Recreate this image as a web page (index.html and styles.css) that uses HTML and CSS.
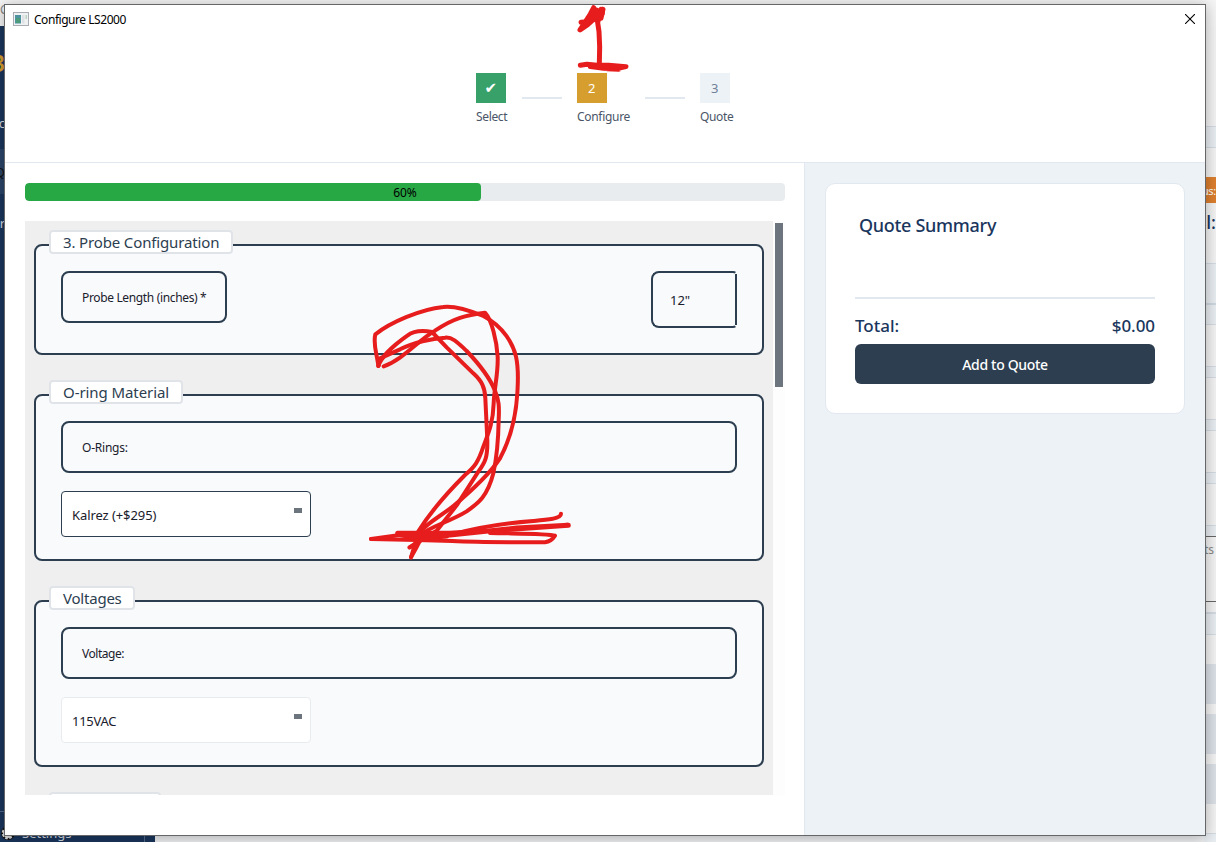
FILE: index.html
```html
<!DOCTYPE html>
<html lang="en">
<head>
<meta charset="utf-8">
<title>Configure LS2000</title>
<link rel="stylesheet" href="styles.css">
</head>
<body>
<div class="desktop">
  <div class="app">
    <div class="app-bar">C</div>
    <div class="app-body">
      <nav class="sidebar">
        <div class="peek brand">3</div>
        <div class="peek first">oc</div>
        <div class="peek active">Q</div>
        <div class="peek">r</div>
        <div class="settings">
          <svg class="gear" viewBox="0 0 14 14"><circle cx="7" cy="7" r="4.5" fill="none" stroke="#111" stroke-width="5"/><circle cx="7" cy="7" r="4.8" fill="none" stroke="#ddd" stroke-width="3" stroke-dasharray="2.4 1.37"/><circle cx="7" cy="7" r="3.8" fill="none" stroke="#ddd" stroke-width="2.4"/></svg>
          <span>Settings</span>
        </div>
      </nav>
      <div class="canvas"></div>
      <div class="edge">
        <div class="band b1"></div>
        <div class="status"><span>us:</span></div>
        <div class="edge-total"><span>al:</span></div>
        <div class="band b2"></div>
        <div class="band b3"></div>
        <div class="band b4"></div>
        <div class="band b5"></div>
        <div class="band b6"></div>
        <div class="notes"><span>ts</span></div>
        <div class="band b7"></div>
        <div class="chip"></div>
        <div class="chip"></div>
        <div class="chip"></div>
        <div class="band b8"></div>
      </div>
    </div>
  </div>

  <div class="dialog">
    <header class="head">
      <div class="titlebar">
        <svg class="appicon" viewBox="0 0 16 14"><rect x=".5" y=".5" width="15" height="13" fill="#f0f1f3" stroke="#a9adb3"/><rect x="2" y="3" width="6" height="8.5" fill="#4d93a0"/><rect x="3" y="6" width="4" height="5" fill="#4c9c7c"/><rect x="9" y="3" width="2.5" height="8.5" fill="#dfe2e4"/><rect x="12.5" y="3" width="1.5" height="4" fill="#b8d4c0"/></svg>
        <span class="title">Configure LS2000</span>
        <svg class="close" viewBox="0 0 10 10"><path d="M0 0L10 10M10 0L0 10" stroke="#000" stroke-width="1.1"/></svg>
      </div>
      <div class="steps">
        <div class="step s1"><div class="tile done">✔</div><span>Select</span></div>
        <div class="link"></div>
        <div class="step s2"><div class="tile current">2</div><span>Configure</span></div>
        <div class="link"></div>
        <div class="step s3"><div class="tile">3</div><span>Quote</span></div>
      </div>
    </header>
    <div class="body">
      <main class="form">
        <div class="progress"><div class="fill" style="width:60%"></div><span>60%</span></div>
        <div class="scroller">
          <div class="viewport">
            <section class="group g1">
              <h2 class="w184">3. Probe Configuration</h2>
              <div class="row">
                <div class="field short">Probe Length (inches) *</div>
                <div class="length">12"</div>
              </div>
            </section>
            <section class="group">
              <h2 class="w134">O-ring Material</h2>
              <div class="field orings">O-Rings:</div>
              <div class="select dark">Kalrez (+$295)<i></i></div>
            </section>
            <section class="group">
              <h2 class="w86">Voltages</h2>
              <div class="field volt">Voltage:</div>
              <div class="select vac">115VAC<i></i></div>
            </section>
            <section class="group"><h2 class="w112"></h2></section>
          </div>
          <div class="track"><div class="thumb"></div></div>
        </div>
      </main>
      <aside class="side">
        <div class="card">
          <h1>Quote Summary</h1>
          <hr>
          <div class="total"><span>Total:</span><span class="amount">$0.00</span></div>
          <button class="add">Add to Quote</button>
        </div>
      </aside>
    </div>
  </div>

  <svg class="mark one" viewBox="0 0 180 220">
    <path d="M50 23L40 42L24 67L9 90L32 74L52 56L66 40L72 28L58 55L52 40L72 30L62 68L66 95L68 140L67 190M12 67L30 65L45 45M78 28L72 55"/>
    <path d="M58 30V60M76 28V40"/>
    <path class="bar" d="M10 196L30 193L60 196L95 196L147 200L120 206L80 205L40 200L90 206L125 208"/>
  </svg>
  <svg class="mark two" viewBox="0 0 750 840">
    <path d="M85 228C92 205 125 170 172 137C193 121 220 121 246 126L290 172L370 250C395 273 405 292 406 325L412 450C413 500 407 515 385 545L320 646L260 722L180 772"/>
    <path d="M85 228C82 195 68 165 76 133C120 98 210 58 280 51C310 47 350 58 400 78C462 110 490 165 498 200C507 240 504 270 502 310C498 375 485 440 450 505C420 550 365 602 310 648C270 680 235 696 205 730L183 802"/>
    <path d="M86 226L90 205L150 178C190 158 245 145 285 143C310 140 330 165 350 183C390 225 422 270 435 302C447 330 448 350 446 390C445 450 443 490 430 550C412 620 385 640 350 664C300 695 240 710 210 735"/>
    <path d="M101 229C160 208 205 150 255 122C310 84 350 75 405 68C425 90 440 150 443 200C445 250 433 290 431 340C429 400 415 430 400 470C385 515 375 530 345 555C290 610 245 660 205 724"/>
    <path d="M63 747L150 735L300 735C370 715 470 699 550 693C590 690 634 687 633 671"/>
    <path d="M63 747L200 750C350 752 280 757 585 757C600 755 610 745 615 737C595 730 500 731 420 729"/>
    <path class="bar" d="M143 730L300 730L410 723L655 706L500 714L300 735L150 734L215 745L290 738"/>
    <path d="M178 772L210 752L198 775L183 802"/>
  </svg>
</div>
</body>
</html>
```

FILE: styles.css
```css
* { box-sizing: border-box; }
body { margin: 0; font-family: "Noto Sans", "Open Sans", sans-serif; font-size: 12px; color: #1a202c; }
h1, h2 { margin: 0; font-weight: 400; }
.desktop { position: relative; width: 1216px; height: 842px; overflow: hidden; }

/* application behind the dialog */
.app { display: flex; flex-direction: column; height: 842px; background: #f2f2f2; }
.app-bar { height: 26px; line-height: 20px; color: #888; background: #f5f5f5; }
.app-body { display: flex; height: 816px; }
.sidebar { display: flex; flex-direction: column; width: 155px; background: #1a365d; color: #d5dbe3; font-size: 13px; }
.peek { display: flex; justify-content: flex-end; align-items: center; width: 5px; height: 45px; margin-bottom: 6px; overflow: hidden; }
.peek.brand { height: 44px; margin: 15px 0 15px; color: #d69e2e; font-size: 23px; font-weight: 600; }
.peek.first { margin-bottom: 4px; }
.peek.active { background: #2c4569; color: #111; }
.settings { display: flex; align-items: flex-start; width: 145px; height: 31px; margin-top: auto; padding-top: 12px; border-top: 1px solid #556b89; border-right: 1px solid #556b89; line-height: 18px; }
.settings span { margin-left: 7px; }
.gear { width: 14px; height: 14px; margin: 2px 0 0 1px; }
.canvas { flex: 1; background: #f0f2f4; }
.edge { width: 12px; padding-top: 100px; background: #f4f4f4; overflow: hidden; }
.band { background: #e9eef2; border: 1px solid #d4dbe3; border-width: 1px 0; }
.b1 { height: 22px; }
.status { height: 26px; margin-top: 29px; background: #dd7f2e; color: #fff; font-size: 11px; line-height: 28px; letter-spacing: -.3px; }
.edge-total { height: 40px; margin-bottom: 20px; color: #1a365d; font-size: 18px; font-weight: 500; line-height: 38px; }
.status span, .edge-total span { display: flex; justify-content: flex-end; width: 12px; }
.b2 { height: 62px; background: linear-gradient(#e9eef2 39px, #cfd8e2 39px, #cfd8e2 41px, #e9eef2 41px); }
.b3, .b4, .b5, .b6 { height: 12px; margin-top: 41px; }
.b6 { border-bottom: 0; }
.notes { height: 66px; margin-top: -1px; border: 1px solid #666; border-width: 1px 0; color: #888; font-size: 12px; line-height: 25px; }
.b7 { height: 23px; margin: 10px 0 29px; border-top-width: 2px; }
.chip { height: 40px; margin-bottom: 10px; background: #dce1e7; }
.b8 { height: 20px; margin-top: 29px; }

/* dialog window */
.dialog { position: absolute; left: 4px; top: 4px; width: 1202px; height: 832px; display: flex; flex-direction: column; background: #fff; border: 1px solid #646667; box-shadow: 0 2px 14px rgba(0,0,0,.3); }
.head { height: 158px; border-bottom: 1px solid #e2e8f0; }
.titlebar { display: flex; align-items: center; height: 28px; padding: 0 10px 0 8px; color: #000; }
.appicon { width: 16px; height: 14px; }
.title { margin-left: 5px; padding-top: 1px; letter-spacing: -.46px; }
.close { width: 10px; height: 10px; margin-left: auto; }
.steps { display: flex; gap: 15px; padding: 40px 0 0 471px; color: #4a5568; }
.step { white-space: nowrap; line-height: 17px; letter-spacing: -.35px; }
.step span { display: block; padding-top: 5px; }
.s1 { width: 31px; }
.s2 { width: 53px; letter-spacing: -.3px; }
.s3 { width: 33px; }
.tile { display: flex; align-items: center; justify-content: center; width: 30px; height: 30px; padding: 1px 1px 0 0; background: #edf2f7; color: #718096; font-size: 13px; }
.tile.done { background: #38a169; color: #fff; font-family: "DejaVu Sans", sans-serif; font-size: 15px; }
.tile.current { background: #d69e2e; color: #fff; }
.link { width: 40px; height: 2px; margin-top: 24px; background: #e2e8f0; }

.body { display: flex; flex: 1; min-height: 0; }
.form { width: 799px; padding: 20px 19px 0 20px; }
.progress { position: relative; height: 18px; border-radius: 4px; background: #e9ecef; color: #000; text-align: center; line-height: 19px; overflow: hidden; }
.fill { height: 18px; border-radius: 4px; background: #28a745; }
.progress span { position: absolute; inset: 0; }
.scroller { display: flex; height: 574px; margin-top: 20px; overflow: hidden; }
.viewport { width: 748px; padding: 23px 9px 0; background: #efefef; overflow: hidden; }
.track { width: 12px; padding: 2px; background: #fdfdfd; }
.thumb { height: 164px; background: #6c757d; }

.group { height: 167px; margin-bottom: 39px; padding: 0 25px; border: 2px solid #2c3e50; border-radius: 8px; background: #f8fafc; }
.group.g1 { height: 111px; }
.group h2 { position: relative; height: 24px; margin: -16px 0 17px -12px; padding-left: 12px; border: 2px solid #e0e4e8; border-radius: 4px; background: #fff; color: #2c3e50; font-size: 15px; line-height: 21px; letter-spacing: -.14px; white-space: nowrap; }
.group .w184 { width: 184px; }
.group .w134 { width: 134px; letter-spacing: -.08px; }
.group .w86 { width: 86px; letter-spacing: -.22px; }
.w112 { width: 112px; }
.row { display: flex; justify-content: space-between; }
.field { height: 52px; padding-left: 19px; border: 2px solid #2c3e50; border-radius: 8px; line-height: 50px; letter-spacing: -.35px; }
.field.orings { letter-spacing: -.22px; }
.field.volt { letter-spacing: -.48px; }
.field.short { width: 166px; white-space: nowrap; }
.length { position: relative; width: 86px; height: 57px; padding-left: 17px; border: 2px solid #2c3e50; border-right: 2px solid transparent; border-radius: 8px 4px 4px 8px; font-size: 13px; line-height: 55px; }
.length::after { content: ""; position: absolute; right: -2px; top: 1px; bottom: 1px; width: 2px; background: #2c3e50; }
.select { display: flex; justify-content: space-between; width: 250px; height: 46px; margin-top: 18px; padding: 0 8px 0 10px; border: 1px solid #e9ecef; border-radius: 4px; background: #fff; font-size: 13px; line-height: 47px; letter-spacing: -.3px; }
.select.dark { border-color: #2c3e50; letter-spacing: -.08px; }
.select i { width: 8px; height: 5px; margin-top: 16px; background: #6c757d; }

.side { width: 401px; padding: 20px; border-left: 1px solid #e2e8f0; background: #edf2f7; }
.card { height: 231px; padding: 29px; border: 1px solid #e2e8f0; border-radius: 10px; background: #fff; color: #1a365d; }
.card h1 { height: 84px; padding-left: 4px; font-size: 18px; font-weight: 500; line-height: 24px; letter-spacing: -.3px; }
.card hr { height: 2px; margin: 0; border: 0; background: #e2e8f0; }
.total { display: flex; justify-content: space-between; height: 45px; padding-top: 15px; font-size: 17px; font-weight: 500; line-height: 24px; }
.amount { letter-spacing: -.05px; }
.add { display: block; width: 300px; height: 40px; padding: 1px 0 0; border: 0; border-radius: 6px; background: #2c3e50; color: #fff; font: 500 14px "Noto Sans", sans-serif; letter-spacing: -.32px; }

/* freehand marker strokes */
.mark { position: absolute; fill: none; stroke: #e71d1d; stroke-width: 11; stroke-linecap: round; stroke-linejoin: round; }
.mark .bar { stroke-width: 15; }
.one { left: 577px; top: 0; width: 60px; height: 73.3px; stroke-width: 15; }
.two { left: 350px; top: 290px; width: 250px; height: 280px; stroke-width: 12; }
```
